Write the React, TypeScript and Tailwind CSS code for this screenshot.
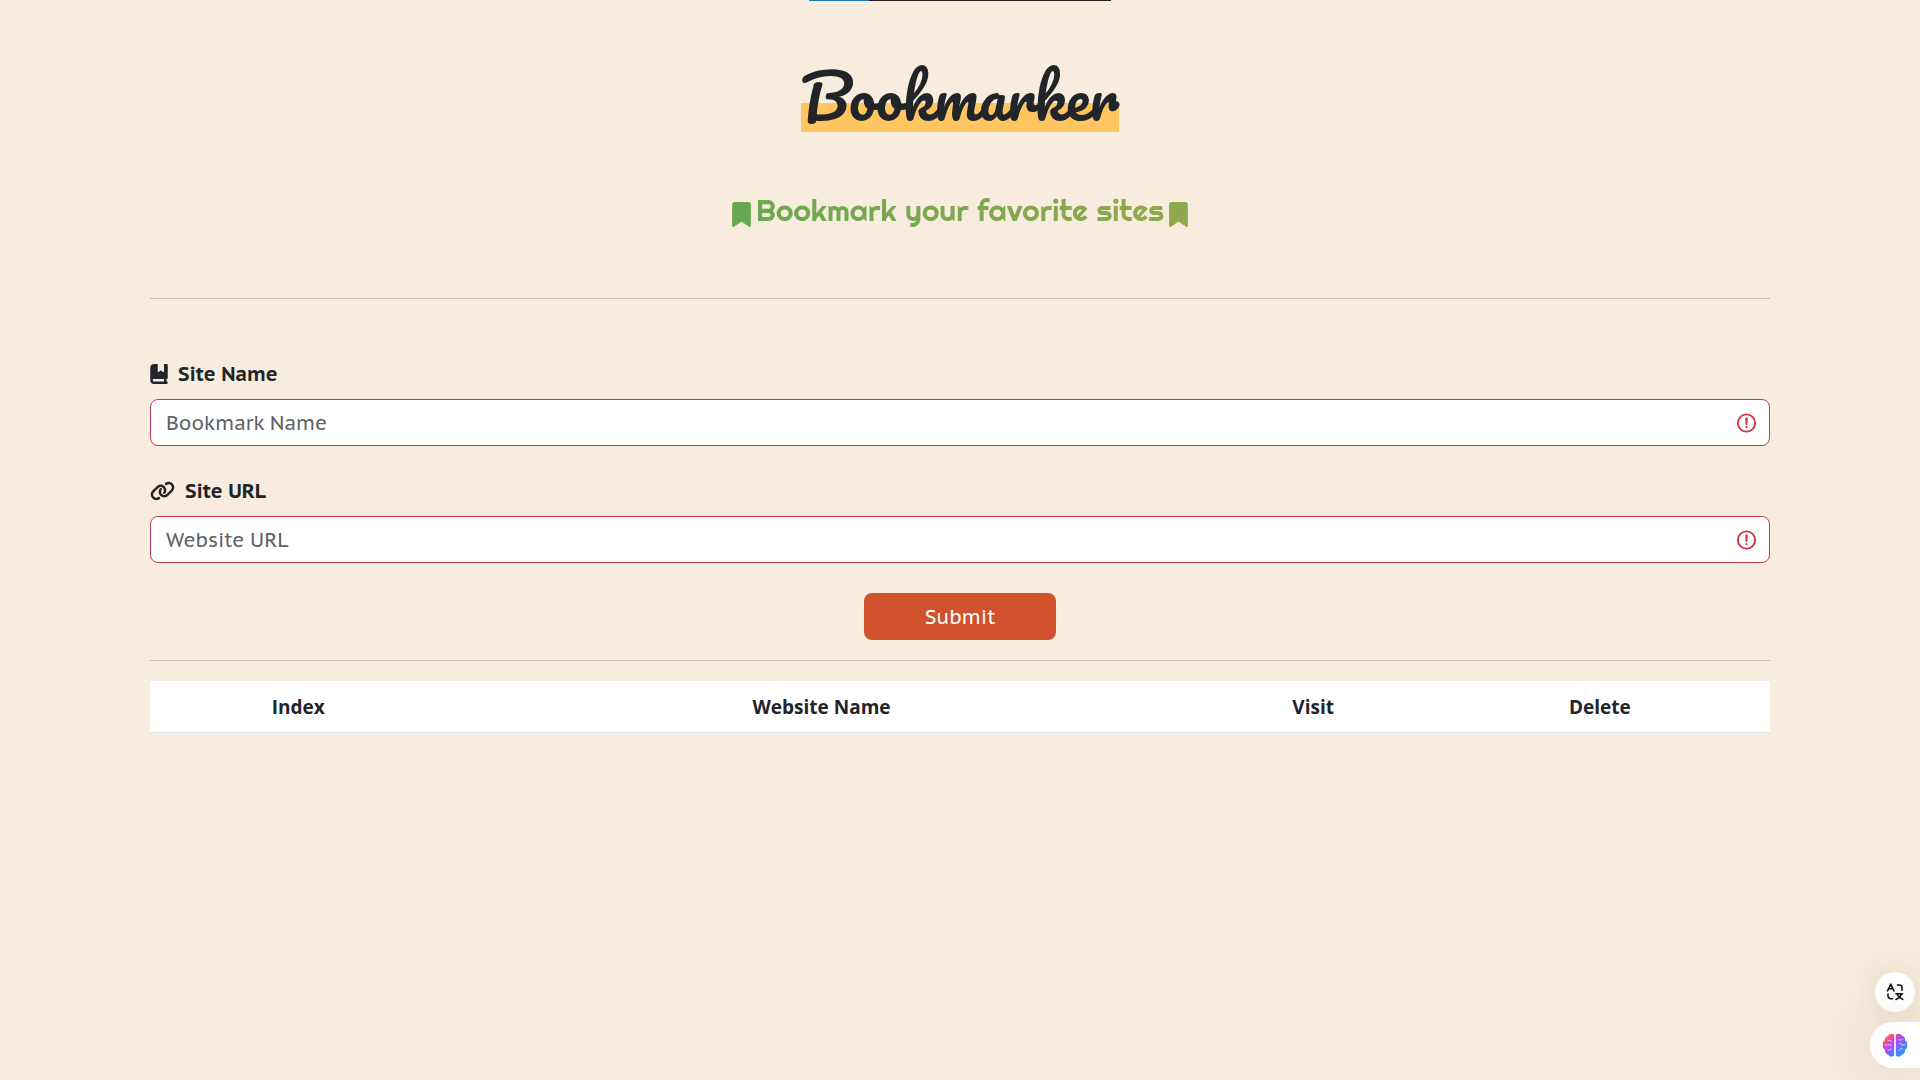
import React from "react";
import { FaBookBookmark, FaBookmark, FaLink } from "react-icons/fa6";

const bodyFont = "font-['PT_Sans_Caption','Noto_Sans',sans-serif]";
const tableFont = "font-['Open_Sans','Noto_Sans',sans-serif]";

function InvalidIcon() {
  return (
    <svg viewBox="0 0 12 12" className="pointer-events-none absolute top-1/2 right-3 size-[23px] -translate-y-1/2" fill="none" stroke="#cf3745" aria-hidden="true">
      <circle cx="6" cy="6" r="4.5" />
      <path strokeLinejoin="round" d="M5.8 3.6h.4L6 6.5z" />
      <circle cx="6" cy="8.2" r=".6" fill="#cf3745" stroke="none" />
    </svg>
  );
}

type FieldProps = { id: string; label: string; placeholder: string; icon: React.ReactNode };

function Field({ id, label, placeholder, icon }: FieldProps) {
  return (
    <div className="mb-[30px]">
      <label htmlFor={id} className="mb-[10px] flex h-[30px] items-center gap-[10px] text-xl font-semibold">
        {icon}
        {label}
      </label>
      <div className="relative">
        <input
          id={id}
          type="text"
          placeholder={placeholder}
          className="block h-[47px] w-full rounded-lg border border-[#c43a50] bg-white px-[15px] text-xl placeholder:text-[#5f6265] focus:outline-none"
        />
        <InvalidIcon />
      </div>
    </div>
  );
}

function TranslateIcon() {
  return (
    <svg viewBox="0 0 18 18" className="size-[18px]" fill="none" stroke="#111" strokeWidth="1.6" strokeLinecap="round" strokeLinejoin="round" aria-hidden="true">
      <path d="M1.5 8 4.8 1.2 8 8M2.8 5.8h4" />
      <path d="M11.5 2h1.8a2.7 2.7 0 0 1 2.7 2.700v2.600" />
      <path d="M2 11v1.800A3 3 0 0 0 5 15.800h1.500" />
      <path d="M10 10.800h6.500M15.500 11c-.8 2.200-2.800 4.200-5.500 5.400M11.500 12c1 1.900 2.800 3.400 5.200 4.300" />
    </svg>
  );
}

function BrainIcon() {
  return (
    <svg viewBox="0 0 26 26" className="size-[26px]" aria-hidden="true">
      <defs>
        <linearGradient id="brain" x1="0.1" y1="0" x2="0.9" y2="0.9">
          <stop offset="0" stopColor="#ff9a2a" />
          <stop offset="0.25" stopColor="#ec4a9a" />
          <stop offset="0.45" stopColor="#b04bf0" />
          <stop offset="0.8" stopColor="#3b86f8" />
        </linearGradient>
      </defs>
      <path
        fill="url(#brain)"
        d="M12.2 2.6v20.8c-1.4 1.6-5 1.6-6.1-.9-2.4-.3-3.5-2.4-2.9-4.6C.9 16.700.2 14.500.9 13 .2 11 1.200 9.300 2.800 8.500 2.600 6 3.700 4.300 5.700 4 6.800 1.700 10.700.9 12.200 2.600ZM13.800 2.600v20.800c1.400 1.600 5 1.600 6.100-.9 2.400-.3 3.500-2.400 2.900-4.600 2.300-1.200 3-3.400 2.300-4.900.7-2-.3-3.700-1.900-4.500.2-2.500-.9-4.200-2.900-4.500-1.100-2.300-5-3.100-6.400-1.400Z"
      />
      <path
        d="M3 13h6.500M6 8.500c1.500-.8 3-.3 3.500 1M6 18c1 .5 2.500.2 3.300-1M23 13h-3.500l-1.500-2M16.800 7.500c1 .8 2.400.8 3.400 0M17 18.500c.5-1.500 2-2.200 3.500-1.500"
        fill="none"
        stroke="#fff"
        strokeWidth="1"
        strokeLinecap="round"
        opacity=".65"
      />
    </svg>
  );
}

export default function App() {
  return (
    <div className={`min-h-screen bg-[#f7ecdd] text-[#212529] ${bodyFont}`}>
      <div className="mx-auto flex h-px w-[302px]">
        <div className="w-[60px] bg-[#1878b4]" />
        <div className="flex-1 bg-[#2e1a1c]" />
      </div>

      <main className="mx-[150px]">
        <header className="flex flex-col items-center pt-[59px]">
          <h1 className="bg-linear-to-b from-transparent from-60% to-[#ffc560] to-60% font-['Pacifico','Lato',cursive] text-[60px] leading-[72px] font-normal">
            Bookmarker
          </h1>
          <h2 className="mt-[60px] flex h-[44px] gap-[5px] font-['Righteous','Lato',sans-serif] text-[30px] leading-9 font-normal">
            <FaBookmark className="h-[25px] w-[19px] self-center text-[#68a850]" />
            <span className="bg-linear-to-r from-[#6ca852] to-[#8fa84d] bg-clip-text text-transparent">
              Bookmark your favorite sites
            </span>
            <FaBookmark className="h-[25px] w-[19px] self-center text-[#90a84d]" />
          </h2>
        </header>

        <hr className="mt-[62px] mb-[60px] border-[#c9bfb4]" />

        <form onSubmit={(e) => e.preventDefault()}>
          <Field id="site-name" label="Site Name" placeholder="Bookmark Name" icon={<FaBookBookmark className="h-5 w-[18px]" />} />
          <Field id="site-url" label="Site URL" placeholder="Website URL" icon={<FaLink className="h-5 w-[25px]" />} />
          <button type="submit" className="mx-auto block h-[47px] w-48 rounded-lg bg-[#d1512d] text-xl font-medium text-white">
            Submit
          </button>
        </form>

        <hr className="my-5 border-[#c9bfb4]" />

        <table className={`w-full table-fixed bg-white text-[19px] ${tableFont}`}>
          <thead>
            <tr className="h-[51px] border-b border-[#dee2e6]">
              <th className="w-[18.3%] pt-[2px] font-bold">Index</th>
              <th className="w-[46.3%] pt-[2px] font-bold">Website Name</th>
              <th className="w-[14.4%] pt-[2px] font-bold">Visit</th>
              <th className="w-[21%] pt-[2px] font-bold">Delete</th>
            </tr>
          </thead>
          <tbody />
        </table>
      </main>

      <aside className="fixed right-0 bottom-3 flex flex-col items-end gap-[10px]">
        <button type="button" aria-label="Translate" className="mr-[5px] flex size-10 items-center justify-center rounded-full bg-white shadow-[0_0_30px_rgba(80,70,20,0.12)]">
          <TranslateIcon />
        </button>
        <button type="button" aria-label="Assistant" className="flex h-[46px] w-[50px] items-center justify-center rounded-l-full bg-white shadow-[0_0_50px_rgba(80,70,20,0.15)]">
          <BrainIcon />
        </button>
      </aside>
    </div>
  );
}
